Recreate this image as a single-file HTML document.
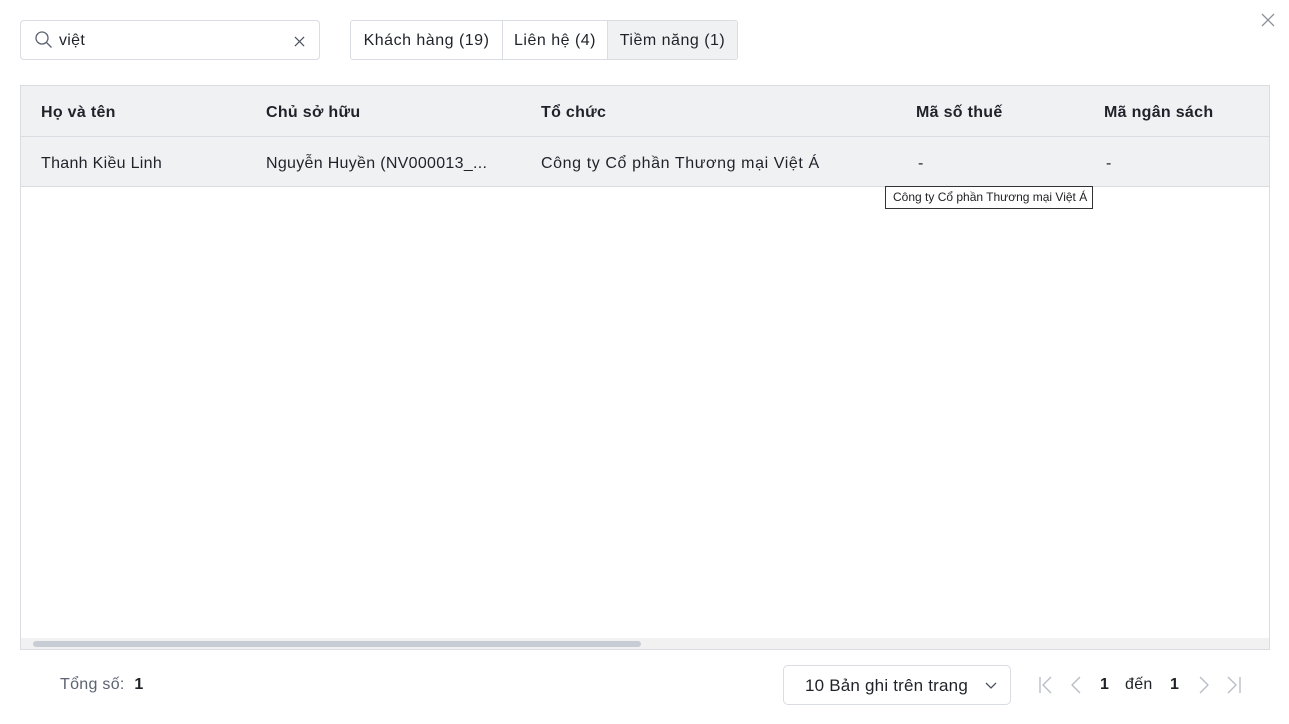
<!DOCTYPE html>
<html><head><meta charset="utf-8"><style>
*{box-sizing:border-box;margin:0;padding:0}
body{width:1289px;height:724px;background:#fff;font-family:"Liberation Sans",sans-serif;color:#1f2329;position:relative;overflow:hidden;font-size:16px;letter-spacing:0.3px}
.abs{position:absolute}
.search{left:20px;top:20px;width:300px;height:40px;border:1px solid #d9dce1;border-radius:4px}
.tabs{left:350px;top:20px;width:388px;height:40px;border:1px solid #d9dce1;border-radius:3px;display:flex;overflow:hidden}
.tabs div{height:100%;display:flex;align-items:center;justify-content:center;font-size:16px;padding-top:1px;letter-spacing:0.5px}
.table{left:20px;top:85px;width:1250px;height:565px;border:1px solid #d9dce1}
.hdr{left:0;top:0;width:1248px;height:51px;background:#f0f1f3;border-bottom:1px solid #d9dce1;font-weight:bold}
.row{left:0;top:51px;width:1248px;height:50px;background:#f0f1f3;border-bottom:1px solid #d9dce1}
.c{position:absolute;top:2px;line-height:50px;white-space:nowrap}
</style></head><body>
<div class="abs search">
<svg class="abs" style="left:13px;top:9px" width="20" height="20" viewBox="0 0 20 20" fill="none" stroke="#5b6270" stroke-width="1.3"><circle cx="8" cy="8" r="6"/><path d="M12.5 12.5l5 5"/></svg>
<span class="abs" style="left:38px;top:11px">việt</span>
<svg class="abs" style="left:273px;top:15px" width="11" height="11" viewBox="0 0 12 12" stroke="#4b5260" stroke-width="1.3"><path d="M1 1l10 10M11 1L1 11"/></svg>
</div>
<div class="abs tabs">
<div style="width:152px;border-right:1px solid #d9dce1">Khách hàng (19)</div>
<div style="width:105px;border-right:1px solid #d9dce1">Liên hệ (4)</div>
<div style="flex:1;background:#f0f1f3">Tiềm năng (1)</div>
</div>
<svg class="abs" style="left:1261px;top:13px" width="14" height="14" viewBox="0 0 14 14" stroke="#8a909a" stroke-width="1.3"><path d="M1 1l12 12M13 1L1 13"/></svg>
<div class="abs table">
<div class="abs hdr">
<span class="c" style="left:20px">Họ và tên</span>
<span class="c" style="left:245px">Chủ sở hữu</span>
<span class="c" style="left:520px">Tổ chức</span>
<span class="c" style="left:895px">Mã số thuế</span>
<span class="c" style="left:1083px">Mã ngân sách</span>
</div>
<div class="abs row">
<span class="c" style="left:20px">Thanh Kiều Linh</span>
<span class="c" style="left:245px">Nguyễn Huyền (NV000013_...</span>
<span class="c" style="left:520px;letter-spacing:0.6px">Công ty Cổ phần Thương mại Việt Á</span>
<span class="c" style="left:897px">-</span>
<span class="c" style="left:1085px">-</span>
</div>
<div class="abs" style="left:0;top:552px;width:1248px;height:11px;background:#f1f1f1"></div>
<div class="abs" style="left:12px;top:555px;width:608px;height:6px;background:#c8ccd5;border-radius:3px"></div>
</div>
<div class="abs" style="left:885px;top:186px;width:208px;height:23px;border:1px solid #333;background:#fff;font-size:12px;line-height:21px;padding-left:7px;color:#222;letter-spacing:0">Công ty Cổ phần Thương mại Việt Á</div>
<div class="abs" style="left:60px;top:676px;color:#5b6270">Tổng số: <b style="color:#1f2329;margin-left:5px">1</b></div>
<div class="abs" style="left:783px;top:665px;width:228px;height:40px;border:1px solid #d9dce1;border-radius:5px">
<span class="abs" style="left:21px;top:10px;font-size:17px;letter-spacing:0.2px">10 Bản ghi trên trang</span>
<svg class="abs" style="left:201px;top:14px" width="12" height="10" viewBox="0 0 12 10" fill="none" stroke="#4b5260" stroke-width="1.3"><path d="M1 3l5 5 5-5"/></svg>
</div>
<svg class="abs" style="left:1036px;top:675px" width="210" height="20" viewBox="0 0 210 20" fill="none" stroke="#b5bac3" stroke-width="1.3">
<path d="M4 2v16M15 2L7 10l8 8"/><path d="M44 2l-8 8 8 8"/><path d="M164 2l8 8-8 8"/><path d="M192 2l8 8-8 8M204 2v16"/>
</svg>
<b class="abs" style="left:1100px;top:676px">1</b>
<span class="abs" style="left:1125px;top:676px">đến</span>
<b class="abs" style="left:1170px;top:676px">1</b>
</body></html>
